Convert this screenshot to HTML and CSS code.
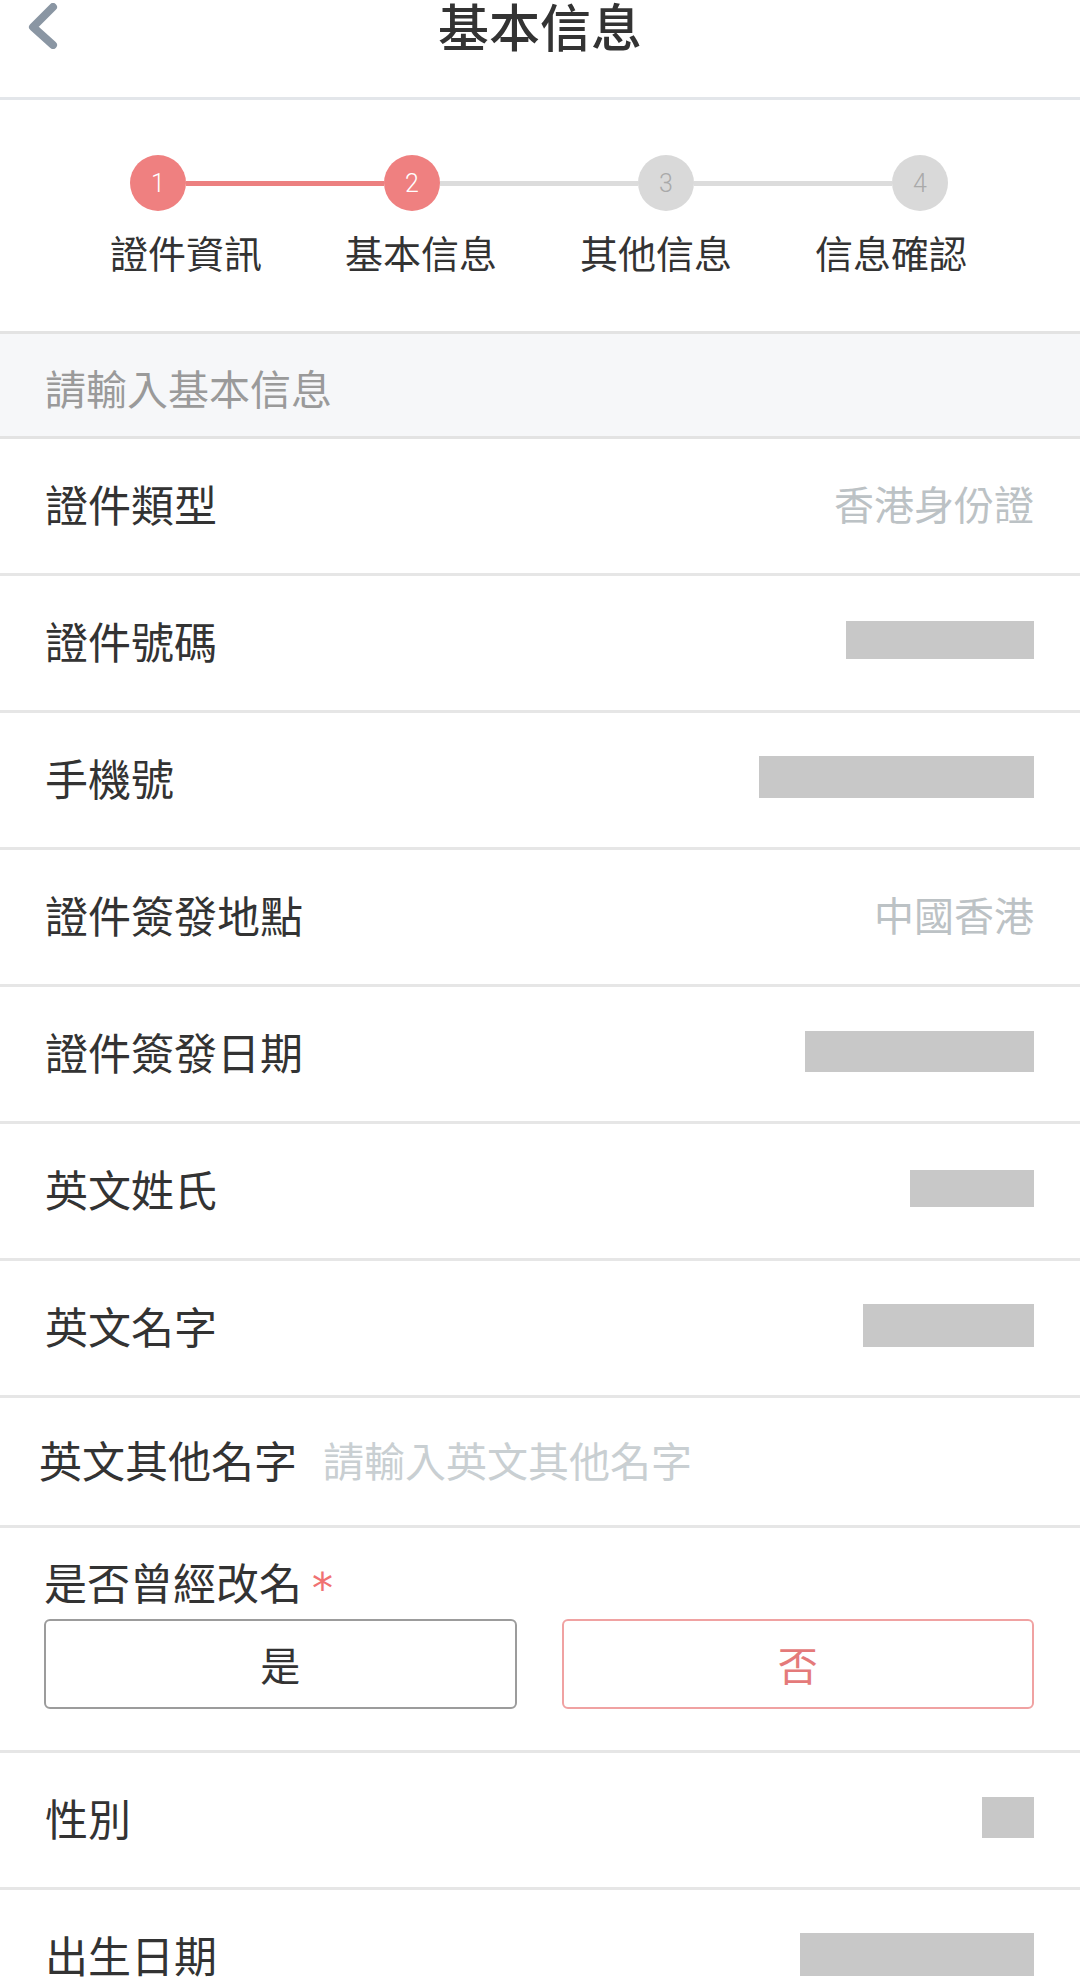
FILE: index.html
```html
<!DOCTYPE html>
<html lang="zh-Hant">
<head>
<meta charset="utf-8">
<title>基本信息</title>
<link rel="stylesheet" href="styles.css">
</head>
<body>
<header class="topbar">
  <div class="back">
    <svg width="32" height="46" viewBox="0 0 32 46"><polyline points="26,4 6,24 26,42" fill="none" stroke="#8a96a3" stroke-width="8" stroke-linecap="round" stroke-linejoin="round"/></svg>
  </div>
  <h1 class="title">基本信息</h1>
  <div></div>
</header>

<section class="steps">
  <div class="dots">
    <span class="dot on">1</span><span class="bar on"></span><span class="dot on">2</span><span class="bar"></span><span class="dot">3</span><span class="bar"></span><span class="dot">4</span>
  </div>
  <div class="labels">
    <span>證件資訊</span><span>基本信息</span><span>其他信息</span><span>信息確認</span>
  </div>
</section>

<div class="section-head">請輸入基本信息</div>

<div class="row"><span class="label">證件類型</span><span class="value">香港身份證</span></div>
<div class="row"><span class="label">證件號碼</span><span class="mask" style="width:188px;height:38px"></span></div>
<div class="row"><span class="label">手機號</span><span class="mask" style="width:275px;height:42px"></span></div>
<div class="row"><span class="label">證件簽發地點</span><span class="value">中國香港</span></div>
<div class="row"><span class="label">證件簽發日期</span><span class="mask" style="width:229px;height:41px"></span></div>
<div class="row"><span class="label">英文姓氏</span><span class="mask" style="width:124px;height:37px"></span></div>
<div class="row"><span class="label">英文名字</span><span class="mask" style="width:171px;height:43px"></span></div>
<div class="row row-input"><span class="label">英文其他名字</span><span class="placeholder">請輸入英文其他名字</span></div>
<div class="row-choice">
  <div class="label choice-label">是否曾經改名<span class="req">*</span></div>
  <div class="choices">
    <div class="btn">是</div>
    <div class="btn btn-active">否</div>
  </div>
</div>
<div class="row"><span class="label">性別</span><span class="mask" style="width:52px;height:41px"></span></div>
<div class="row"><span class="label">出生日期</span><span class="mask" style="width:234px;height:43px"></span></div>
</body>
</html>
```

FILE: styles.css
```css
* { box-sizing: border-box; }
html, body {
  margin: 0;
  padding: 0;
  background: #ffffff;
  font-family: "Noto Sans CJK TC", "Noto Sans CJK SC", "Noto Sans", sans-serif;
  color: #333333;
}
body { width: 1080px; overflow: hidden; }

.topbar {
  height: 100px;
  border-bottom: 3px solid #e3e6ea;
  display: grid;
  grid-template-columns: 1fr auto 1fr;
  align-items: start;
}
.back {
  padding-left: 27px;
  padding-top: 3px;
  line-height: 0;
}
.title {
  margin: 0;
  font-size: 51px;
  line-height: 48px;
  font-weight: 500;
  color: #333333;
  padding-top: 1px;
}

.steps {
  height: 234px;
  border-bottom: 3px solid #e3e3e3;
  padding-top: 55px;
}
.dots {
  display: flex;
  align-items: center;
  padding-left: 130px;
}
.dot {
  width: 56px;
  height: 56px;
  border-radius: 50%;
  background: #d9d9d9;
  color: #a9a9a9;
  font-family: Roboto, "Noto Sans", sans-serif;
  font-size: 25px;
  font-weight: 300;
  display: flex;
  align-items: center;
  justify-content: center;
  flex: none;
}
.dot.on { background: #ef8080; color: #ffffff; }
.bar {
  width: 198px;
  height: 5px;
  background: #dcdcdc;
  flex: none;
}
.bar.on { background: #ec8080; }
.labels {
  display: flex;
  gap: 83px;
  padding-left: 110px;
  margin-top: 19px;
  font-size: 38px;
  line-height: 44px;
  color: #333333;
}
.labels span { width: 152px; white-space: nowrap; }

.section-head {
  height: 105px;
  background: #f6f7f9;
  border-bottom: 3px solid #e3e3e3;
  padding-left: 45px;
  display: flex;
  align-items: center;
  font-size: 41px;
  color: #9a9a9a;
  padding-top: 4px;
}

.row {
  height: 137px;
  border-bottom: 3px solid #e6e6e6;
  display: flex;
  align-items: center;
  justify-content: space-between;
  padding: 0 46px 6px 45px;
}
.row:nth-of-type(1) { height: 135px; }
.label {
  font-size: 43px;
  color: #333333;
  white-space: nowrap;
}
.value {
  font-size: 40px;
  color: #bcc2c5;
}
.mask {
  display: block;
  background: #c8c8c8;
}
.row-input {
  justify-content: flex-start;
  gap: 26px;
  padding-left: 39px;
  height: 130px;
}
.placeholder {
  font-size: 41px;
  color: #c9cfd2;
}

.row-choice {
  height: 225px;
  border-bottom: 3px solid #e6e6e6;
  padding: 25px 46px 0 44px;
}
.choice-label {
  line-height: 56px;
}
.req {
  color: #f07272;
  margin-left: 10px;
  font-size: 42px;
  font-family: "DejaVu Sans", sans-serif;
  font-weight: 400;
  vertical-align: -3px;
  line-height: 0;
}
.choices {
  display: flex;
  gap: 45px;
  margin-top: 10px;
}
.btn {
  flex: 1;
  height: 90px;
  border: 2px solid #9c9c9c;
  border-radius: 6px;
  display: flex;
  align-items: center;
  justify-content: center;
  font-size: 40px;
  color: #333333;
}
.btn-active {
  border-color: #f0a2a2;
  color: #e47a7a;
}
```
